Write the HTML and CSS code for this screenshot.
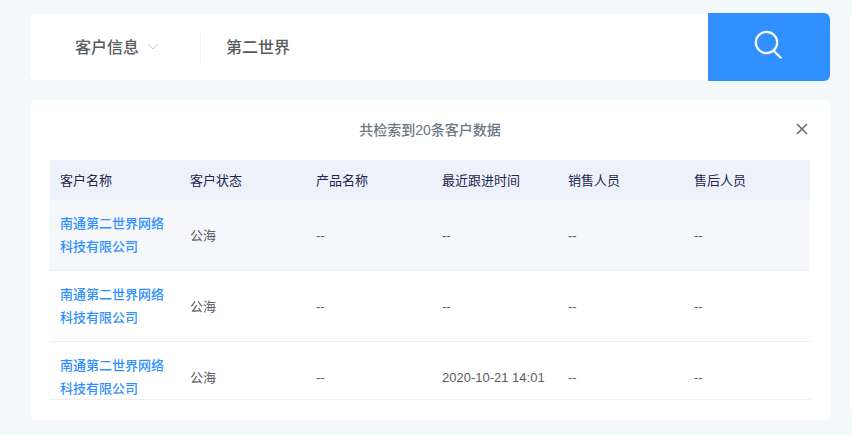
FILE: index.html
```html
<!DOCTYPE html>
<html lang="zh-CN">
<head>
<meta charset="utf-8">
<meta name="viewport" content="width=device-width, initial-scale=1">
<title>客户数据</title>
<link rel="stylesheet" href="styles.css">
</head>
<body>
<div class="page">
  <main class="content">
    <form class="search">
      <div class="search-type">
        <select class="search-select" aria-label="检索类型">
          <option>客户信息</option>
        </select>
        <svg class="chevron" viewBox="0 0 12 8" aria-hidden="true"><path d="M1 1l5 5 5-5"/></svg>
      </div>
      <input class="search-input" type="text" value="第二世界" aria-label="关键词">
      <button class="search-button" type="button" aria-label="检索">
        <svg class="search-icon" viewBox="0 0 30 30" aria-hidden="true"><circle cx="12.500" cy="12.500" r="10.700"/><path d="M19.500 20.500l7.200 7.200"/></svg>
      </button>
    </form>
    <section class="panel">
      <header class="panel-header">
        <h1 class="panel-title">共检索到20条客户数据</h1>
        <button class="close" type="button" aria-label="关闭">
          <svg class="close-icon" viewBox="0 0 12 12" aria-hidden="true"><path d="M1 1l10 10M11 1L1 11"/></svg>
        </button>
      </header>
      <div class="table-wrap">
        <table class="table">
          <colgroup><col class="col-name"><col><col><col><col><col></colgroup>
          <thead>
            <tr><th>客户名称</th><th>客户状态</th><th>产品名称</th><th>最近跟进时间</th><th>销售人员</th><th>售后人员</th></tr>
          </thead>
          <tbody>
            <tr class="active"><td><a class="link" href="#">南通第二世界网络科技有限公司</a></td><td>公海</td><td>--</td><td>--</td><td>--</td><td>--</td></tr>
            <tr><td><a class="link" href="#">南通第二世界网络科技有限公司</a></td><td>公海</td><td>--</td><td>--</td><td>--</td><td>--</td></tr>
            <tr><td><a class="link" href="#">南通第二世界网络科技有限公司</a></td><td>公海</td><td>--</td><td>2020-10-21 14:01</td><td>--</td><td>--</td></tr>
          </tbody>
        </table>
      </div>
    </section>
  </main>
  <aside class="side"></aside>
</div>
</body>
</html>
```
FILE: styles.css
```css
* {
  box-sizing: border-box;
}

body {
  margin: 0;
  min-height: 100vh;
  background: #f3f8fb;
  color: #5a5c60;
  font-family: "Liberation Sans", "Noto Sans CJK SC", sans-serif;
  font-size: 13px;
}

button,
input,
select {
  margin: 0;
  padding: 0;
  border: 0;
  background: none;
  color: inherit;
  font: inherit;
}

svg {
  display: block;
  fill: none;
  stroke: currentColor;
}

.page {
  display: grid;
  grid-template-columns: minmax(0, 1fr) 2px;
  gap: 20px;
  padding: 13px 0 15px 30px;
}

.search {
  display: flex;
  align-items: center;
  margin-bottom: 19px;
  border-radius: 6px;
  background: linear-gradient(#fff, #fff) center / 100% calc(100% - 2px) no-repeat;
  font-size: 16px;
  font-weight: 500;
}

.search-type {
  display: flex;
  align-items: center;
  gap: 8px;
  width: 171px;
  height: 32px;
  padding-left: 45px;
  border-right: 1px solid #f0f2f9;
}

.search-select {
  width: 64px;
  height: 32px;
  appearance: none;
}

.chevron {
  width: 12px;
  height: 8px;
  color: #c5cad3;
}

.search-input {
  flex: 1;
  min-width: 0;
  height: 32px;
  padding: 0 25px 2px;
}

.search-button {
  display: flex;
  align-items: center;
  justify-content: center;
  width: 122px;
  height: 68px;
  padding-bottom: 4px;
  border-radius: 0 6px 6px 0;
  background: #3190ff;
  color: #fff;
}

.search-icon {
  width: 30px;
  height: 30px;
  stroke-width: 2.2;
  stroke-linecap: round;
}

.panel {
  padding: 0 20px 20px;
  border-radius: 6px;
  background: #fff;
}

.panel-header {
  display: grid;
  grid-template-columns: 20px 1fr 20px;
  align-items: center;
  height: 60px;
  padding-bottom: 2px;
}

.panel-title {
  grid-column: 2;
  margin: 0;
  color: #6a7885;
  font-size: 14px;
  font-weight: 500;
  text-align: center;
}

.close {
  display: flex;
  justify-content: flex-end;
  padding: 4px 2px;
  color: #666;
}

.close-icon {
  width: 12px;
  height: 12px;
  stroke-width: 1.5;
}

.table-wrap {
  max-height: 240px;
  overflow: hidden;
  border-bottom: 1px solid #ebeef5;
}

.table {
  width: 100%;
  border-collapse: separate;
  border-spacing: 0;
  table-layout: fixed;
  line-height: 23px;
}

.col-name {
  width: 130px;
}

.table th {
  height: 40px;
  padding: 0 10px;
  background: #edf2fa;
  color: #1f2651;
  font-weight: 400;
  text-align: left;
}

.table td {
  padding: 12px 10px;
  border-bottom: 1px solid #ebeef5;
}

.active td {
  background: #f5f7fb;
}

.link {
  color: #3190ff;
  font-weight: 500;
  text-decoration: none;
}

.side {
  margin: 1px 0 7px;
  border-radius: 6px 0 0 6px;
  background: #fff;
}
```
